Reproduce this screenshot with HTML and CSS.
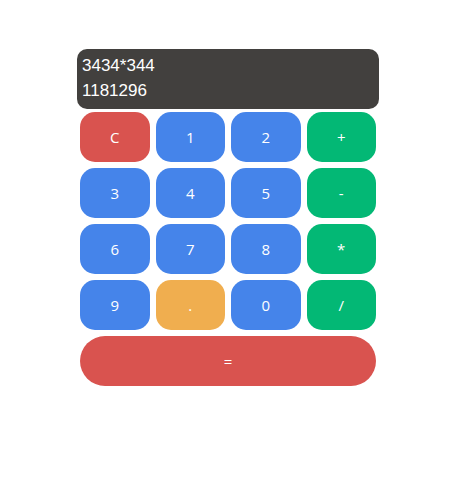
FILE: index.html
```html
<!DOCTYPE html>
<html>
<head>
<meta charset="utf-8">
<link rel="stylesheet" href="styles.css">
</head>
<body>
<div class="calc">
  <div class="display">
    <div class="line">3434*344</div>
    <div class="line">1181296</div>
  </div>
  <div class="keys">
    <button class="key red">C</button>
    <button class="key blue">1</button>
    <button class="key blue">2</button>
    <button class="key green">+</button>
    <button class="key blue">3</button>
    <button class="key blue">4</button>
    <button class="key blue">5</button>
    <button class="key green">-</button>
    <button class="key blue">6</button>
    <button class="key blue">7</button>
    <button class="key blue">8</button>
    <button class="key green">*</button>
    <button class="key blue">9</button>
    <button class="key orange">.</button>
    <button class="key blue">0</button>
    <button class="key green">/</button>
    <button class="key red equals">=</button>
  </div>
</div>
</body>
</html>
```

FILE: styles.css
```css
html, body {
  margin: 0;
  padding: 0;
  background: #ffffff;
}

.calc {
  width: 302px;
  margin: 49px 0 0 77px;
}

.display {
  height: 60px;
  box-sizing: border-box;
  padding: 4px 5px;
  background: #42403e;
  border-radius: 10px;
  color: #ffffff;
  font-family: "Liberation Sans", Arial, sans-serif;
  font-size: 17px;
  line-height: 25px;
}

.keys {
  display: grid;
  grid-template-columns: repeat(4, 1fr);
  grid-auto-rows: 50px;
  gap: 6px;
  padding: 3px;
}

.key {
  border: none;
  margin: 0;
  padding: 0;
  border-radius: 15px;
  color: #ffffff;
  font-family: "Open Sans", "Noto Sans", sans-serif;
  font-size: 15px;
}

.red { background: #d9534f; }
.blue { background: #4584ea; }
.green { background: #03b875; }
.orange { background: #f0ae4f; }

.equals {
  grid-column: 1 / span 4;
  border-radius: 25px;
}
```
